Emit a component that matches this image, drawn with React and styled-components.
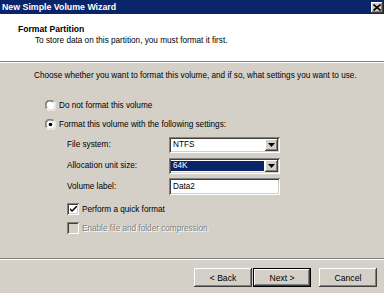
import React from "react";
import styled, { createGlobalStyle, css } from "styled-components";

const Global = createGlobalStyle`
  html, body { margin: 0; padding: 0; background: #d4d0c8; overflow: hidden; }
  * { box-sizing: border-box; }
`;

const FONT = `"Liberation Sans", Arial, sans-serif`;

const raised = css`
  background: #d4d0c8;
  box-shadow: inset -1px -1px #404040, inset 1px 1px #ffffff,
    inset -2px -2px #808080, inset 2px 2px #d4d0c8;
`;

const sunken = css`
  box-shadow: inset 1px 1px #808080, inset -1px -1px #ffffff,
    inset 2px 2px #404040, inset -2px -2px #d4d0c8;
`;

const Window = styled.div`
  width: 384px;
  height: 293px;
  background: #d4d0c8;
  display: flex;
  flex-direction: column;
  font-family: ${FONT};
  font-size: 8.2px;
  color: #000;
`;

const TitleBar = styled.div`
  height: 14px;
  background: #0a246a;
  display: flex;
  align-items: center;
  justify-content: space-between;
  padding: 0 1px 0 2px;
`;

const TitleText = styled.span`
  color: #fff;
  font-weight: bold;
  font-size: 8.8px;
  line-height: 14px;
`;

const CloseButton = styled.div`
  ${raised};
  width: 12px;
  height: 11px;
  display: flex;
  align-items: center;
  justify-content: center;
  margin-top: 1px;
`;

const Header = styled.div`
  height: 47px;
  background: #fff;
  padding: 9px 0 0 18px;
`;

const HeaderTitle = styled.div`
  font-weight: bold;
  font-size: 8.6px;
  line-height: 12px;
`;

const HeaderSub = styled.div`
  padding-left: 17px;
  line-height: 12px;
`;

const Rule = styled.div`
  height: 2px;
  border-top: 1px solid #808080;
  border-bottom: 1px solid #ffffff;
`;

const Content = styled.div`
  flex: 1;
  padding: 7px 0 0 34px;
  display: flex;
  flex-direction: column;
`;

const Intro = styled.div`
  line-height: 12px;
  margin-bottom: 16px;
`;

const OptionRow = styled.div`
  height: 14px;
  display: flex;
  align-items: center;
  margin-left: ${(p) => p.$indent || 0}px;
  margin-bottom: ${(p) => p.$after || 0}px;
  color: ${(p) => (p.$disabled ? "#808080" : "#000")};
  text-shadow: ${(p) => (p.$disabled ? "1px 1px #ffffff" : "none")};
`;

const Fields = styled.div`
  margin: 5px 0 0 33px;
  display: flex;
  flex-direction: column;
  gap: 4px;
`;

const FieldRow = styled.div`
  height: 17px;
  display: grid;
  grid-template-columns: 102px 111px;
  align-items: center;
`;

const Box = styled.div`
  ${sunken};
  background: #fff;
  height: ${(p) => (p.$combo ? 16 : 17)}px;
  padding: 2px;
  display: flex;
  align-items: stretch;
`;

const BoxText = styled.div`
  flex: 1;
  display: flex;
  align-items: center;
  padding-left: 2px;
  margin: ${(p) => (p.$selected ? "1px 1px 1px 0" : "0")};
  background: ${(p) => (p.$selected ? "#0a246a" : "transparent")};
  color: ${(p) => (p.$selected ? "#fff" : "#000")};
`;

const DropButton = styled.div`
  ${raised};
  width: 13px;
  display: flex;
  align-items: center;
  justify-content: center;
`;

const Checks = styled.div`
  margin: 7px 0 0 33px;
  display: flex;
  flex-direction: column;
  gap: 5px;
`;

const CheckBox = styled.div`
  ${sunken};
  width: 12px;
  height: 12px;
  background: ${(p) => (p.$disabled ? "#d4d0c8" : "#fff")};
  display: flex;
  align-items: center;
  justify-content: center;
  flex: none;
  margin-right: 3px;
`;

const Footer = styled.div`
  display: flex;
  flex-direction: column;
`;

const ButtonRow = styled.div`
  display: flex;
  justify-content: flex-end;
  padding: 8px 7px 6px 0;
`;

const Button = styled.div`
  ${raised};
  width: 58px;
  height: 19px;
  display: flex;
  align-items: center;
  justify-content: center;
  font-size: 8.6px;
  margin-left: ${(p) => p.$gap || 0}px;
  ${(p) =>
    p.$default &&
    css`
      box-shadow: inset 0 0 0 1px #000, inset -2px -2px #404040,
        inset 2px 2px #ffffff, inset -3px -3px #808080;
    `}
`;

const RadioIcon = styled.svg`
  flex: none;
  margin-right: 3px;
`;

const Radio = ({ checked }) => (
  <RadioIcon width="11" height="11" viewBox="0 0 12 12">
    <circle cx="6" cy="6" r="5.5" fill="#fff" />
    <path d="M1.5 9.5 A5.5 5.5 0 0 1 9.5 1.5" stroke="#808080" strokeWidth="1" fill="none" />
    <path d="M2.3 8.7 A4.5 4.5 0 0 1 8.7 2.3" stroke="#404040" strokeWidth="1" fill="none" />
    <path d="M10.5 2.5 A5.5 5.5 0 0 1 2.5 10.5" stroke="#ffffff" strokeWidth="1" fill="none" />
    <path d="M9.7 3.3 A4.5 4.5 0 0 1 3.3 9.7" stroke="#d4d0c8" strokeWidth="1" fill="none" />
    {checked && <circle cx="6" cy="6" r="2" fill="#000" />}
  </RadioIcon>
);

const Check = () => (
  <svg width="7" height="7" viewBox="0 0 7 7">
    <path d="M0 2 L0 4 L2 6 L7 1 L7 -1 L2 4 Z" fill="#000" />
  </svg>
);

const Arrow = () => (
  <svg width="7" height="4" viewBox="0 0 7 4">
    <path d="M0 0 H7 L3.5 4 Z" fill="#000" />
  </svg>
);

const CloseX = () => (
  <svg width="8" height="7" viewBox="0 0 8 7">
    <path d="M0.5 0.5 L7.5 6.5 M7.5 0.5 L0.5 6.5" stroke="#000" strokeWidth="1.6" />
  </svg>
);

export default function App() {
  return (
    <>
      <Global />
      <Window>
        <TitleBar>
          <TitleText>New Simple Volume Wizard</TitleText>
          <CloseButton>
            <CloseX />
          </CloseButton>
        </TitleBar>
        <Header>
          <HeaderTitle>Format Partition</HeaderTitle>
          <HeaderSub>To store data on this partition, you must format it first.</HeaderSub>
        </Header>
        <Rule />
        <Content>
          <Intro>
            Choose whether you want to format this volume, and if so, what settings you want to use.
          </Intro>
          <OptionRow $indent={11} $after={5}>
            <Radio />
            <span>Do not format this volume</span>
          </OptionRow>
          <OptionRow $indent={11}>
            <Radio checked />
            <span>Format this volume with the following settings:</span>
          </OptionRow>
          <Fields>
            <FieldRow>
              <span>File system:</span>
              <Box $combo>
                <BoxText>NTFS</BoxText>
                <DropButton>
                  <Arrow />
                </DropButton>
              </Box>
            </FieldRow>
            <FieldRow>
              <span>Allocation unit size:</span>
              <Box $combo>
                <BoxText $selected>64K</BoxText>
                <DropButton>
                  <Arrow />
                </DropButton>
              </Box>
            </FieldRow>
            <FieldRow>
              <span>Volume label:</span>
              <Box>
                <BoxText>Data2</BoxText>
              </Box>
            </FieldRow>
          </Fields>
          <Checks>
            <OptionRow>
              <CheckBox>
                <Check />
              </CheckBox>
              <span>Perform a quick format</span>
            </OptionRow>
            <OptionRow $disabled>
              <CheckBox $disabled />
              <span>Enable file and folder compression</span>
            </OptionRow>
          </Checks>
        </Content>
        <Footer>
          <Rule />
          <ButtonRow>
            <Button>&lt; Back</Button>
            <Button $default $gap={1}>Next &gt;</Button>
            <Button $gap={8}>Cancel</Button>
          </ButtonRow>
        </Footer>
      </Window>
    </>
  );
}
